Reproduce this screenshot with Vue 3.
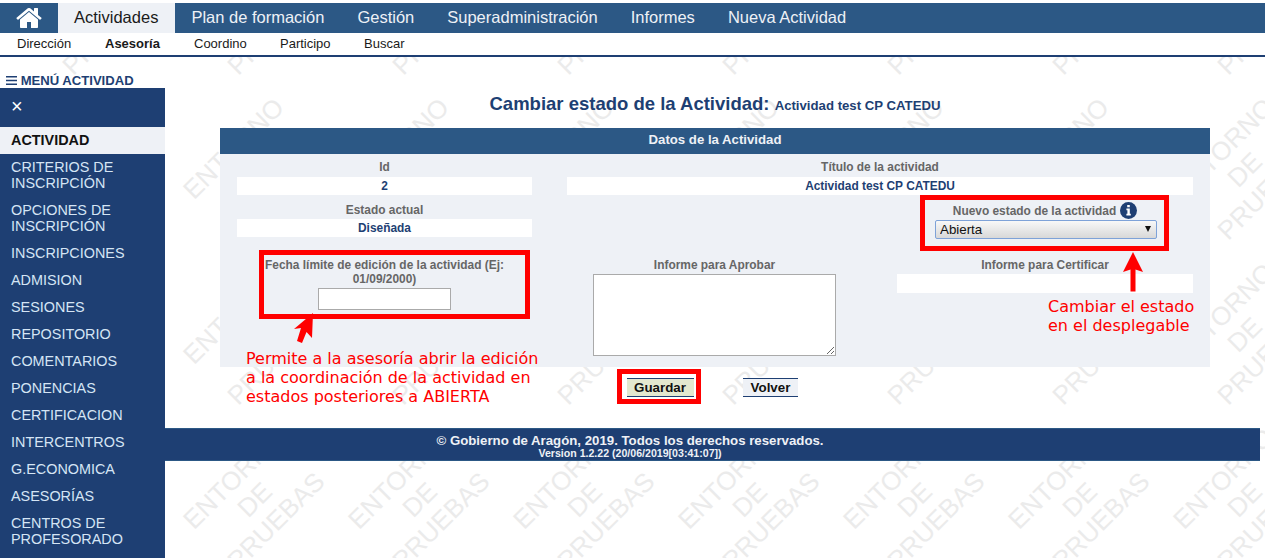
<script setup>
const tabs = ['Plan de formación', 'Gestión', 'Superadministración', 'Informes', 'Nueva Actividad']
const subs = [
  { t: 'Dirección', w: 88 },
  { t: 'Asesoría', w: 89, b: true },
  { t: 'Coordino', w: 86 },
  { t: 'Participo', w: 84 },
  { t: 'Buscar', w: 60 }
]
const menu = ['CRITERIOS DE INSCRIPCIÓN', 'OPCIONES DE INSCRIPCIÓN', 'INSCRIPCIONES', 'ADMISION', 'SESIONES', 'REPOSITORIO', 'COMENTARIOS', 'PONENCIAS', 'CERTIFICACION', 'INTERCENTROS', 'G.ECONOMICA', 'ASESORÍAS', 'CENTROS DE PROFESORADO']
const marks = []
for (let r = 0; r < 4; r++) {
  for (let c = 0; c < 8; c++) {
    marks.push({ k: r + '-' + c, x: 96 + c * 165, y: 11 + r * 165, top: r === 0 })
  }
}
</script>

<template>
  <div class="page">
    <svg class="watermark" width="1265" height="558" aria-hidden="true">
      <g v-for="m in marks" :key="m.k" :transform="`translate(${m.x} ${m.y}) rotate(-45)`">
        <text v-if="!m.top" x="0" y="-30" text-anchor="middle">ENTORNO</text>
        <text v-if="!m.top" x="0" y="0" text-anchor="middle">DE</text>
        <text x="0" y="30" text-anchor="middle">PRUEBAS</text>
      </g>
    </svg>

    <header class="top">
      <nav class="tabs">
        <a class="home">
          <svg width="28" height="28" viewBox="0 0 1792 1792"><path fill="#fff" d="M1472 992v480q0 26-19 45t-45 19h-384v-384h-256v384h-384q-26 0-45-19t-19-45v-480q0-1 .5-3t.5-3l575-474 575 474q1 2 1 6zm223-69l-62 74q-8 9-21 11h-3q-13 0-21-7l-692-577-692 577q-12 8-24 7-13-2-21-11l-62-74q-8-10-7-23.5t11-21.5l719-599q32-26 76-26t76 26l244 204v-195q0-14 9-23t23-9h192q14 0 23 9t9 23v408l219 182q10 8 11 21.5t-7 23.5z"/></svg>
        </a>
        <a class="tab active">Actividades</a>
        <a v-for="t in tabs" :key="t" class="tab">{{ t }}</a>
      </nav>
      <nav class="subs">
        <a v-for="s in subs" :key="s.t" :class="{ strong: s.b }" :style="{ width: s.w + 'px' }">{{ s.t }}</a>
      </nav>
    </header>

    <aside class="side">
      <div class="side-label">
        <svg width="11" height="9" viewBox="0 0 11 9"><path fill="#1e3f73" d="M0 0h11v1.6H0zM0 3.7h11v1.6H0zM0 7.4h11V9H0z"/></svg>
        MENÚ ACTIVIDAD
      </div>
      <div class="side-box">
        <div class="close">×</div>
        <div class="side-active">ACTIVIDAD</div>
        <a v-for="m in menu" :key="m" class="side-item">{{ m }}</a>
      </div>
    </aside>

    <main class="main">
      <div class="content">
        <h1 class="title">Cambiar estado de la Actividad: <small>Actividad test CP CATEDU</small></h1>
        <section class="panel">
          <h2 class="panel-head">Datos de la Actividad</h2>
          <div class="grid">
            <div>
              <div class="lab first">Id</div>
              <div class="val">2</div>
            </div>
            <div class="wide">
              <div class="lab first">Título de la actividad</div>
              <div class="val">Actividad test CP CATEDU</div>
            </div>
            <div>
              <div class="lab">Estado actual</div>
              <div class="val">Diseñada</div>
            </div>
            <div></div>
            <div class="state">
              <div class="lab nudge">
                Nuevo estado de la actividad
                <svg class="info" width="17" height="17" viewBox="0 0 17 17"><circle cx="8.500" cy="8.500" r="8.500" fill="#1e3f73"/><path fill="#fff" d="M7.200 3h2.600v2.300H7.200zM6.400 6.600h3.400v5.200h1v1.600H6.400v-1.600h1V8.200h-1z"/></svg>
              </div>
              <div class="select-wrap">
                <select class="select"><option>Abierta</option></select>
                <span class="caret"></span>
              </div>
            </div>
            <div class="last">
              <div class="lab">Fecha límite de edición de la actividad (Ej: 01/09/2000)</div>
              <input class="date" type="text" />
            </div>
            <div class="last">
              <div class="lab">Informe para Aprobar</div>
              <textarea class="area"></textarea>
            </div>
            <div class="last">
              <div class="lab">Informe para Certificar</div>
              <div class="val cert"></div>
            </div>
          </div>
        </section>
        <div class="actions">
          <button class="btn save">Guardar</button>
          <button class="btn back">Volver</button>
        </div>
      </div>
      <footer class="foot">
        <div class="foot-a">© Gobierno de Aragón, 2019. Todos los derechos reservados.</div>
        <div class="foot-b">Version 1.2.22 (20/06/2019[03:41:07])</div>
      </footer>
    </main>

    <div class="mark box-a"></div>
    <div class="mark box-b"></div>
    <div class="mark box-c"></div>
    <svg class="arrows" width="1265" height="558" aria-hidden="true">
      <path fill="#ff0000" d="M1133 252L1143 272L1135.500 269.500V291.500H1130.500V269.500L1123 272Z"/>
      <path fill="#ff0000" d="M313 313L312 338L306.500 332L302 343L297 341L301 328L294 329Z"/>
    </svg>
    <p class="note note-a">Permite a la asesoría abrir la edición<br />a la coordinación de la actividad en<br />estados posteriores a ABIERTA</p>
    <p class="note note-b">Cambiar el estado<br />en el desplegable</p>
  </div>
</template>

<style>
html, body { margin: 0; background: #fff; }
</style>

<style scoped>
.page {
  position: relative;
  width: 1265px;
  height: 558px;
  overflow: hidden;
  font-family: "Liberation Sans", Arial, sans-serif;
  background: #fff;
}
.watermark { position: absolute; left: 0; top: 0; }
.watermark text {
  font-family: "Liberation Sans", Arial, sans-serif;
  font-size: 26px;
  fill: #ebebeb;
}
.top { position: relative; background: #fff; padding-top: 3px; }
.tabs { display: flex; height: 30px; background: #2c5885; }
.home { width: 57.5px; display: flex; align-items: center; justify-content: center; }
.tab { padding: 0 16.5px; font-size: 16.5px; line-height: 29px; color: #eef1f6; }
.tab.active { background: #eef1f6; color: #1a1a1a; }
.subs {
  display: flex;
  height: 22px;
  padding-left: 17px;
  border-bottom: 2px solid #1e3f73;
  font-size: 13px;
  line-height: 21px;
  color: #1a1a1a;
}
.strong { font-weight: bold; }

.side { position: absolute; left: 0; top: 73px; bottom: 0; width: 165px; z-index: 3; display: flex; flex-direction: column; }
.side-label {
  height: 15px;
  padding-left: 6px;
  font-size: 13.1px;
  line-height: 15px;
  font-weight: bold;
  color: #1e3f73;
  white-space: nowrap;
}
.side-box { flex: 1; background: #1e3f73; color: #d5e5f5; font-size: 14.4px; line-height: 16px; }
.close { height: 39px; padding-left: 11px; font-size: 20px; line-height: 37px; color: #fff; }
.side-active { height: 27px; padding-left: 11px; background: #eef1f6; color: #111; font-weight: bold; line-height: 27px; }
.side-item { display: block; padding: 5px 11px 6px; }

.main { position: relative; width: 1260px; }
.content { padding-left: 220px; width: 990px; }
.title {
  height: 21px;
  margin: 36px 0 14px;
  font-size: 18.5px;
  line-height: 21px;
  font-weight: bold;
  color: #1e3f73;
  text-align: center;
}
.title small { font-size: 13.2px; }
.panel { background: #eef1f6; }
.panel-head {
  margin: 0;
  height: 26px;
  background: #2c5885;
  color: #eef1f6;
  font-size: 13.2px;
  line-height: 24px;
  font-weight: bold;
  text-align: center;
}
.grid {
  display: grid;
  grid-template-columns: 295px 295px 296px;
  column-gap: 35px;
  row-gap: 8px;
  padding: 7px 17px 11px;
}
.wide { grid-column: span 2; }
.lab {
  font-size: 11.92px;
  line-height: 14px;
  font-weight: bold;
  color: #666;
  text-align: center;
  margin-bottom: 2px;
}
.lab.first { margin-top: -1px; margin-bottom: 3px; }
.val {
  background: #fff;
  height: 18px;
  font-size: 11.92px;
  line-height: 18px;
  font-weight: bold;
  color: #1e3f73;
  text-align: center;
}
.last { margin-top: 11px; display: flex; flex-direction: column; align-items: center; }
.last .lab { align-self: stretch; }
.nudge { display: flex; justify-content: center; align-items: center; gap: 4px; margin-top: -1px; margin-bottom: 1px; height: 17px; }
.info { flex: none; }
.state { display: flex; flex-direction: column; align-items: center; }
.select-wrap { position: relative; width: 222px; height: 19px; margin-left: 2px; }
.select {
  appearance: none;
  display: block;
  box-sizing: border-box;
  width: 100%;
  height: 19px;
  margin: 0;
  padding: 0 0 0 4px;
  border: 1px solid #7ea2d8;
  border-radius: 2px;
  background: linear-gradient(#f8f8f8, #d8d8d8);
  font-family: "Liberation Sans", Arial, sans-serif;
  font-size: 13.33px;
  color: #111;
}
.caret {
  position: absolute;
  right: 6.5px;
  top: 6px;
  border-left: 3.5px solid transparent;
  border-right: 3.5px solid transparent;
  border-top: 6px solid #111;
}
.date {
  box-sizing: border-box;
  display: block;
  width: 133px;
  height: 22px;
  margin: 0;
  border: 1px solid #aaa;
  background: #fff;
}
.area {
  box-sizing: border-box;
  display: block;
  width: 243px;
  height: 82px;
  margin: 0;
  border: 1px solid #aaa;
  background: #fff;
}
.cert { align-self: stretch; height: 19px; }
.actions { display: flex; gap: 49px; padding: 11px 0 0 407px; }
.btn {
  box-sizing: border-box;
  height: 19px;
  margin: 0;
  padding: 0;
  border: 0;
  border-top: 1px solid #1e3f73;
  border-bottom: 1px solid #1e3f73;
  font-family: "Liberation Sans", Arial, sans-serif;
  font-size: 13.33px;
  line-height: 17px;
  font-weight: bold;
  color: #111;
}
.save { width: 67px; padding-right: 1px; background: #e3e8cf; }
.back { width: 55px; background: #eef1f6; }
.foot {
  box-sizing: border-box;
  height: 33px;
  margin-top: 31px;
  padding-top: 5px;
  background: #1e3f73;
  border-top: 1px solid #2c5885;
  border-bottom: 1px solid #2c5885;
  color: #eef1f6;
  text-align: center;
  font-weight: bold;
}
.foot-a { font-size: 13.24px; line-height: 14px; }
.foot-b { font-size: 10.6px; line-height: 11px; }

.mark { position: absolute; box-sizing: border-box; border: 5px solid #ff0000; z-index: 4; }
.box-a { left: 259px; top: 250px; width: 271px; height: 69px; }
.box-b { left: 920px; top: 195px; width: 249px; height: 56px; }
.box-c { left: 617px; top: 369px; width: 84px; height: 35px; }
.arrows { position: absolute; left: 0; top: 0; z-index: 4; pointer-events: none; }
.note {
  position: absolute;
  margin: 0;
  z-index: 4;
  font-family: "DejaVu Sans", sans-serif;
  font-size: 16px;
  line-height: 19px;
  color: #ff0000;
  white-space: nowrap;
}
.note-a { left: 246px; top: 349px; }
.note-b { left: 1048px; top: 297px; }
</style>
